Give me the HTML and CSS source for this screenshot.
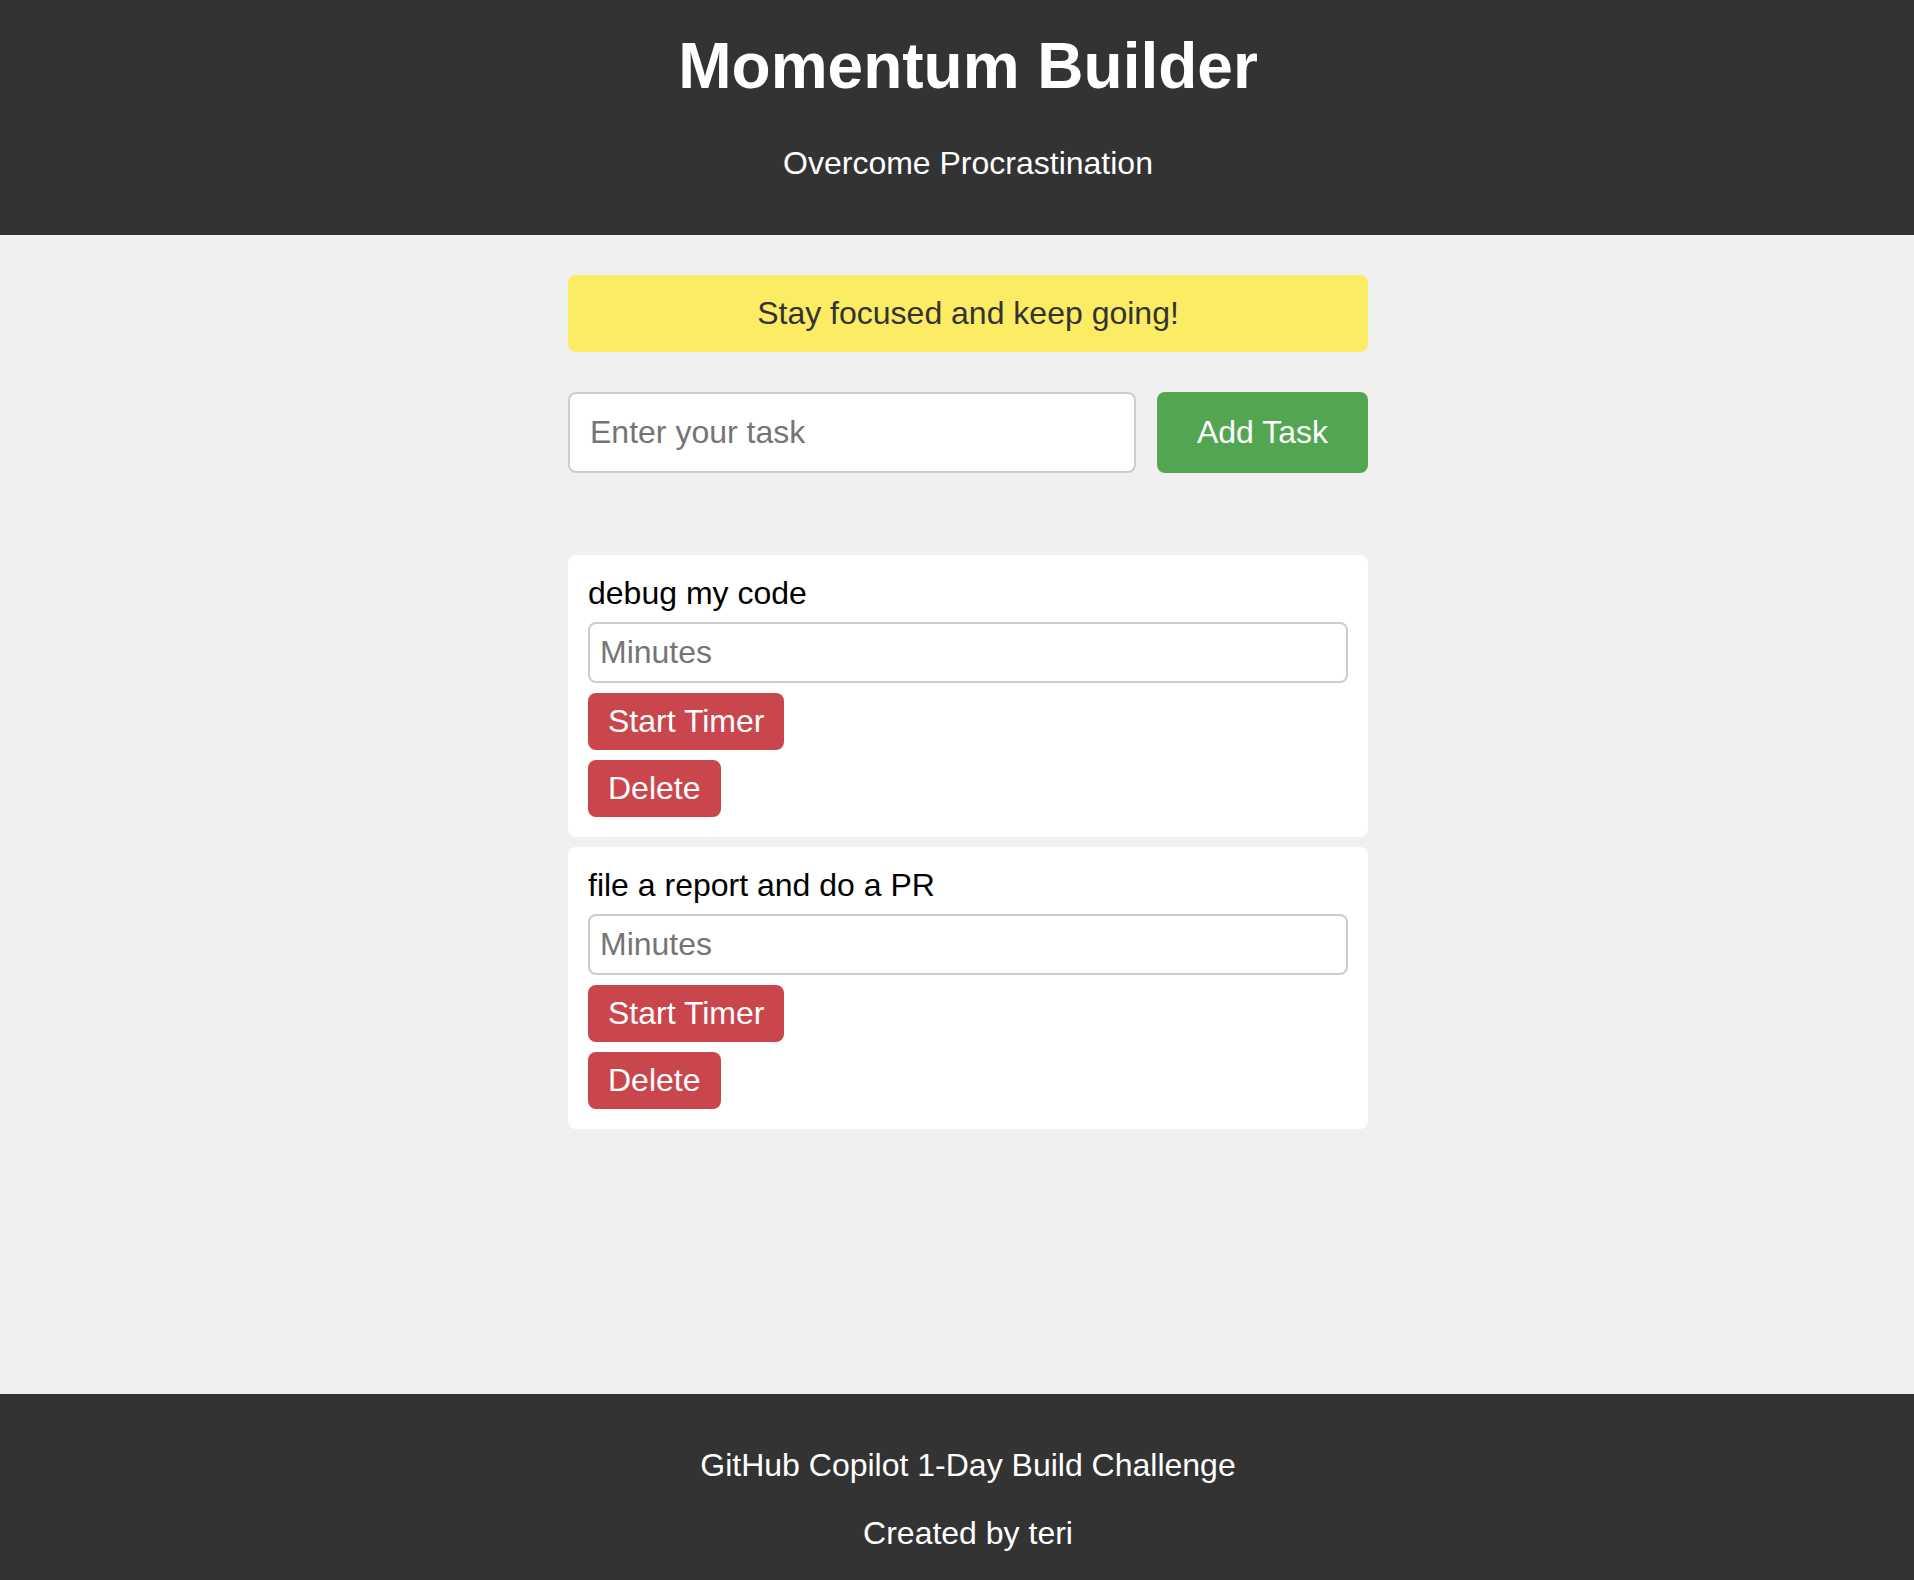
FILE: index.html
```html
<!DOCTYPE html>
<html lang="en">
<head>
<meta charset="utf-8">
<title>Momentum Builder</title>
<link rel="stylesheet" href="styles.css">
</head>
<body>
<header class="site-header">
  <h1 class="site-title">Momentum Builder</h1>
  <p class="site-subtitle">Overcome Procrastination</p>
</header>
<main class="site-main">
  <div class="container">
    <div class="motivation">Stay focused and keep going!</div>
    <div class="task-form">
      <input class="task-input" type="text" placeholder="Enter your task">
      <button class="btn btn-add">Add Task</button>
    </div>
    <ul class="task-list">
      <li class="task-card">
        <span class="task-name">debug my code</span>
        <input class="minutes-input" type="number" placeholder="Minutes">
        <button class="btn btn-red">Start Timer</button>
        <button class="btn btn-red">Delete</button>
      </li>
      <li class="task-card">
        <span class="task-name">file a report and do a PR</span>
        <input class="minutes-input" type="number" placeholder="Minutes">
        <button class="btn btn-red">Start Timer</button>
        <button class="btn btn-red">Delete</button>
      </li>
    </ul>
  </div>
</main>
<footer class="site-footer">
  <p class="footer-line">GitHub Copilot 1-Day Build Challenge</p>
  <p class="footer-line">Created by teri</p>
</footer>
</body>
</html>
```
FILE: styles.css
```css
* { box-sizing: border-box; }

html, body {
  margin: 0;
  padding: 0;
}

body {
  font-family: "Liberation Sans", Arial, Helvetica, sans-serif;
  background: #f0f0f0;
  color: #000;
  min-height: 100vh;
  display: flex;
  flex-direction: column;
}

.site-header {
  background: #333333;
  color: #ffffff;
  text-align: center;
  padding: 29px 0 53px 22px;
}

.site-title {
  margin: 0;
  font-size: 64px;
  font-weight: bold;
}

.site-subtitle {
  margin: 42px 0 0;
  font-size: 32px;
}

.site-main {
  flex: 1;
  padding: 40px 0 0 22px;
}

.container {
  width: 800px;
  margin: 0 auto;
}

.motivation {
  background: #fbec63;
  color: #333333;
  font-size: 32px;
  text-align: center;
  padding: 20px;
  border-radius: 8px;
}

.task-form {
  display: flex;
  gap: 21px;
  margin-top: 40px;
}

.task-input {
  flex: 1;
  min-width: 0;
  font-family: inherit;
  font-size: 32px;
  padding: 20px;
  border: 2px solid #cccccc;
  border-radius: 8px;
  background: #ffffff;
  color: #000;
}

.task-input::placeholder,
.minutes-input::placeholder {
  color: #757575;
}

.btn {
  font-family: inherit;
  font-size: 32px;
  color: #ffffff;
  border: none;
  border-radius: 8px;
  cursor: pointer;
}

.btn-add {
  background: #53a651;
  padding: 0 40px;
}

.btn-red {
  background: #c9464c;
  padding: 10px 20px;
}

.task-list {
  list-style: none;
  margin: 82px 0 0;
  padding: 0;
  display: flex;
  flex-direction: column;
  gap: 10px;
}

.task-card {
  background: #ffffff;
  border-radius: 8px;
  padding: 20px;
  display: flex;
  flex-direction: column;
  align-items: flex-start;
  gap: 10px;
}

.task-name {
  font-size: 32px;
  color: #000;
}

.minutes-input {
  width: 100%;
  font-family: inherit;
  font-size: 32px;
  padding: 10px 10px;
  border: 2px solid #cccccc;
  border-radius: 8px;
  background: #ffffff;
}

.site-footer {
  background: #333333;
  color: #ffffff;
  text-align: center;
  padding: 53px 0 28px 22px;
}

.footer-line {
  margin: 0;
  font-size: 32px;
}

.footer-line + .footer-line {
  margin-top: 31px;
}
```
